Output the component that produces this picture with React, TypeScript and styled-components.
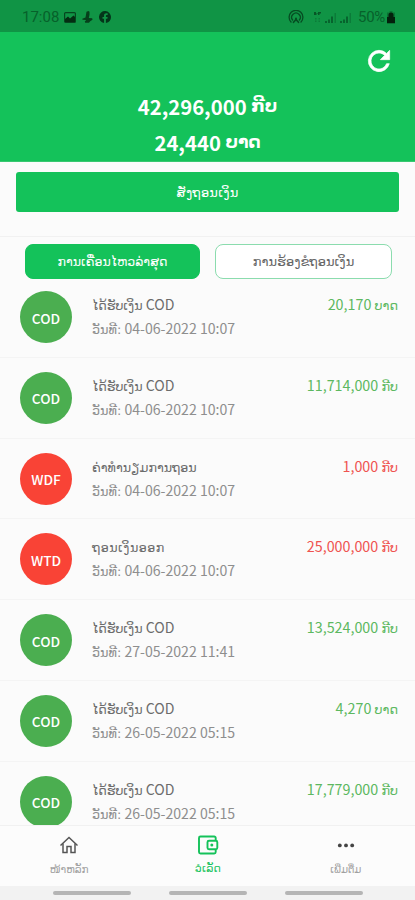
import React from 'react';
import styled, { createGlobalStyle } from 'styled-components';

const latin = '"Noto Sans CJK SC", "DejaVu Sans", sans-serif';

const GlobalStyle = createGlobalStyle`
  * { box-sizing: border-box; }
  body { margin: 0; background: #fbfbfb; }
  button { font: inherit; padding: 0; margin: 0; }
`;

const Screen = styled.div`
  width: 415px;
  height: 900px;
  display: flex;
  flex-direction: column;
  overflow: hidden;
  background: #fbfbfb;
  font-family: ${latin};
`;

const StatusBar = styled.header`
  height: 32px;
  flex: none;
  display: flex;
  align-items: center;
  justify-content: space-between;
  padding: 2px 20px 0 22px;
  background: #109445;
  color: #07612b;
  font: 15px/20px Roboto, sans-serif;
`;

const StatusGroup = styled.div<{ $gap: number }>`
  display: flex;
  align-items: center;
  gap: ${(p) => p.$gap}px;
`;

const Clock = styled.span`
  width: 37px;
  margin-right: -1px;
  white-space: nowrap;
`;

const Battery = styled.span`
  font-size: 15px;
  letter-spacing: -0.3px;
  margin: 0 -1px 0 3px;
`;

const SignalGap = styled.span`
  width: 3px;
`;

const Balance = styled.section`
  height: 130px;
  flex: none;
  display: flex;
  flex-direction: column;
  background: #14c25a;
  border-bottom: 1px solid #38c871;
  color: #fff;
`;

const RefreshRow = styled.div`
  height: 56px;
  display: flex;
  justify-content: flex-end;
  align-items: center;
  padding: 2px 20px 0 0;
`;

const BalanceLine = styled.div`
  height: 36px;
  display: flex;
  align-items: center;
  justify-content: center;
  font-size: 20.3px;
  font-weight: 700;
  line-height: 36px;
  white-space: pre;
`;

const Lao = styled.span<{ $size: number; $spacing?: number }>`
  font-family: "DejaVu Sans", sans-serif;
  font-size: ${(p) => p.$size}px;
  letter-spacing: ${(p) => p.$spacing ?? 0}px;
  white-space: nowrap;
`;

const WithdrawPanel = styled.section`
  height: 75px;
  flex: none;
  padding: 10px 16px 0;
  border-bottom: 1px solid #f1f1f1;
`;

const WithdrawButton = styled.button`
  width: 100%;
  height: 40px;
  display: flex;
  align-items: center;
  justify-content: center;
  border: 0;
  border-radius: 3px;
  background: #14c25a;
  color: #fff;
`;

const Tabs = styled.nav`
  height: 42px;
  flex: none;
  display: grid;
  grid-template-columns: 175px 177px;
  column-gap: 15px;
  padding: 7px 0 0 25px;
`;

const Tab = styled.button<{ $active?: boolean }>`
  height: 35px;
  display: flex;
  align-items: center;
  justify-content: center;
  border: 1px solid ${(p) => (p.$active ? '#14c25a' : '#8bdcae')};
  border-radius: 8px;
  background: ${(p) => (p.$active ? '#14c25a' : '#fff')};
  color: ${(p) => (p.$active ? '#fff' : '#666')};
`;

const List = styled.main`
  flex: 1;
  min-height: 0;
  overflow: hidden;
  margin-top: -2px;
`;

const Row = styled.article`
  height: 80.8px;
  display: grid;
  grid-template-columns: 72px 1fr auto;
  padding: 0 17px 0 20px;
  border-bottom: 1px solid #f4f4f4;
`;

const Avatar = styled.div<{ $debit: boolean }>`
  width: 52px;
  height: 52px;
  margin-top: 14px;
  border-radius: 50%;
  display: flex;
  align-items: center;
  justify-content: center;
  padding-top: 1px;
  background: ${(p) => (p.$debit ? '#f94336' : '#4bae50')};
  color: #fff;
  font-size: 13.7px;
  font-weight: 500;
`;

const Details = styled.div`
  padding-top: 15px;
`;

const Title = styled.div`
  height: 24px;
  line-height: 24px;
  font-size: 14.1px;
  color: #6c6c6c;
  white-space: pre;
`;

const DateLine = styled(Title)`
  color: #8e8e8e;
`;

const Amount = styled.div<{ $debit: boolean }>`
  padding-top: 15px;
  height: 40px;
  line-height: 24px;
  font-size: 14.3px;
  white-space: pre;
  color: ${(p) => (p.$debit ? '#ef5350' : '#5cb860')};
`;

const BottomNav = styled.nav`
  height: 61px;
  flex: none;
  display: grid;
  grid-template-columns: repeat(3, 1fr);
  border-top: 1px solid #f1f1f1;
  background: #fcfcfc;
`;

const NavItem = styled.button<{ $active?: boolean }>`
  display: flex;
  flex-direction: column;
  align-items: center;
  border: 0;
  background: none;
  padding: ${(p) => (p.$active ? '9px 0 0 1px' : '9px 0 0')};
  gap: ${(p) => (p.$active ? 7 : 8)}px;
  line-height: 13px;
  color: ${(p) => (p.$active ? '#14c25a' : '#a0a0a0')};
`;

const SystemBar = styled.footer`
  height: 14px;
  flex: none;
  display: flex;
  justify-content: center;
  gap: 38px;
  padding-top: 5px;
  background: #f2f2f2;
`;

const Handle = styled.span`
  width: 78px;
  height: 4px;
  border-radius: 2px;
  background: #b5b5b5;
`;

type Entry = {
  code: string;
  title: string;
  titleSpacing?: number;
  suffix?: string;
  date: string;
  amount: string;
  unit: string;
  debit?: boolean;
};

const received = { code: 'COD', title: 'ໄດ້ຮັບເງິນ', suffix: ' COD' };

const entries: Entry[] = [
  { ...received, date: '04-06-2022 10:07', amount: '20,170', unit: 'ບາດ' },
  { ...received, date: '04-06-2022 10:07', amount: '11,714,000', unit: 'ກີບ' },
  { code: 'WDF', title: 'ຄ່າທຳນຽມການຖອນ', date: '04-06-2022 10:07', amount: '1,000', unit: 'ກີບ', debit: true },
  { code: 'WTD', title: 'ຖອນເງິນອອກ', titleSpacing: 0.5, date: '04-06-2022 10:07', amount: '25,000,000', unit: 'ກີບ', debit: true },
  { ...received, date: '27-05-2022 11:41', amount: '13,524,000', unit: 'ກີບ' },
  { ...received, date: '26-05-2022 05:15', amount: '4,270', unit: 'ບາດ' },
  { ...received, date: '26-05-2022 05:15', amount: '17,779,000', unit: 'ກີບ' },
];

const PictureIcon = () => (
  <svg width="12" height="11" viewBox="0 0 12 11">
    <rect x="0.6" y="0.6" width="10.8" height="9.8" rx="1" fill="none" stroke="#06461f" strokeWidth="1.2" />
    <path d="M1 9V7l3-2.4 2 1.8L9.500 3.500 11 5v5H1z" fill="#042d12" />
  </svg>
);

const PersonIcon = () => (
  <svg width="11" height="12" viewBox="0 0 11 12" fill="#063f1b">
    <path d="M4.500.8L6.500 0l1 .8v3L6.800 7l3.400.3.3 1.500-2.300 1.400L7 11.800H3.200L2.800 10.500 4.200 9 .5 8.800.3 7.800 3.500 6.500z" />
  </svg>
);

const FacebookIcon = () => (
  <svg width="12" height="12" viewBox="0 0 24 24">
    <path fill="#04351a" d="M24 12a12 12 0 1 0-13.900 11.900v-8.400H7V12h3.100V9.400c0-3 1.800-4.700 4.500-4.700 1.300 0 2.700.2 2.700.2v3h-1.500c-1.500 0-2 .9-2 1.900V12h3.400l-.5 3.500h-2.900v8.400A12 12 0 0 0 24 12z" />
  </svg>
);

const HotspotIcon = () => (
  <svg width="16" height="14" viewBox="0 0 16 14" fill="none" stroke="#064c22" strokeWidth="1.300" strokeLinecap="round">
    <path d="M3 12a6.900 6.900 0 1 1 10 0" />
    <path d="M4.600 10a4.300 4.300 0 1 1 6.800 0" />
    <path d="M8 8.500v1" strokeWidth="2" />
    <path d="M5.500 12.300L8 9.500l2.500 2.800" strokeWidth="1.600" />
  </svg>
);

const NetworkIcon = () => (
  <svg width="9" height="12" viewBox="0 0 9 12" fill="#075626">
    <path d="M1 1h2v1.500h2V1h3v1.500H6.500V4H5V3H3.500v1H1V2.500z" />
    <path d="M2 7h1.500v1.500H2zM5.500 7H7v1.500H5.500zM2 9.500h1.500V11H2zM5.500 9.500H7V11H5.500z" opacity=".4" />
  </svg>
);

const SignalIcon = () => (
  <svg width="12" height="12" viewBox="0 0 12 12" fill="#075d2a">
    <path d="M0 10h2v2H0zM3 8.500h2V12H3zM6 5.500h2V12H6z" opacity=".9" />
    <path d="M9.500 2H11V12H9.500z" opacity=".45" />
  </svg>
);

const BatteryIcon = () => (
  <svg width="8" height="13" viewBox="0 0 8 13">
    <path d="M2.500 0h3v1.500H8V13H0V1.500h2.500z" fill="#0a7435" />
    <path d="M1.500 6V4a2.500 2.500 0 0 1 5 0v2H8v6H0V6z" fill="#03200c" />
  </svg>
);

const RefreshIcon = () => (
  <svg width="32" height="32" viewBox="0 0 24 24" fill="#fff">
    <path d="M17.650 6.350A7.958 7.958 0 0 0 12 4a8 8 0 1 0 7.730 10h-2.080A6 6 0 1 1 12 6c1.660 0 3.140.69 4.220 1.780L13 11h7V4l-2.350 2.350z" stroke="#fff" strokeWidth=".5" />
  </svg>
);

const HomeIcon = () => (
  <svg width="20" height="20" viewBox="0 0 20 20" fill="none" stroke="#555" strokeWidth="1.500">
    <path d="M1.500 10.500L10 2.500l8.500 8" />
    <path d="M4 8.500v9h4v-6h4v6h4v-9" />
  </svg>
);

const WalletIcon = () => (
  <svg width="22" height="20" viewBox="0 0 22 20" fill="none" stroke="#14c25a" strokeWidth="1.900">
    <path d="M18.700 5.500V3a1.500 1.500 0 0 0-1.500-1.500H3.500A1.500 1.500 0 0 0 2 3v14a1.500 1.500 0 0 0 1.500 1.500h13.700a1.500 1.500 0 0 0 1.500-1.500v-2.500" />
    <rect x="10.500" y="5.700" width="9.800" height="8.600" rx="1.500" />
    <circle cx="14.800" cy="10" r="1.500" fill="#14c25a" stroke="none" />
  </svg>
);

const MoreIcon = () => (
  <svg width="18" height="20" viewBox="0 0 18 20" fill="#444">
    <circle cx="2.800" cy="10.400" r="1.900" />
    <circle cx="9" cy="10.400" r="1.900" />
    <circle cx="15.200" cy="10.400" r="1.900" />
  </svg>
);

export default function App() {
  return (
    <>
      <GlobalStyle />
      <Screen>
        <StatusBar>
          <StatusGroup $gap={6}>
            <Clock>17:08</Clock>
            <PictureIcon />
            <PersonIcon />
            <FacebookIcon />
          </StatusGroup>
          <StatusGroup $gap={3}>
            <HotspotIcon />
            <SignalGap />
            <NetworkIcon />
            <SignalIcon />
            <SignalIcon />
            <Battery>50%</Battery>
            <BatteryIcon />
          </StatusGroup>
        </StatusBar>
        <Balance>
          <RefreshRow><RefreshIcon /></RefreshRow>
          <BalanceLine>42,296,000 <Lao $size={17.2}>ກີບ</Lao></BalanceLine>
          <BalanceLine>24,440 <Lao $size={17.2}>ບາດ</Lao></BalanceLine>
        </Balance>
        <WithdrawPanel>
          <WithdrawButton><Lao $size={13} $spacing={0.2}>ສັ່ງຖອນເງິນ</Lao></WithdrawButton>
        </WithdrawPanel>
        <Tabs>
          <Tab $active><Lao $size={12.6}>ການເຄື່ອນໄຫວລ່າສຸດ</Lao></Tab>
          <Tab><Lao $size={13}>ການຮ້ອງຂໍຖອນເງິນ</Lao></Tab>
        </Tabs>
        <List>
          {entries.map((e, i) => (
            <Row key={i}>
              <Avatar $debit={!!e.debit}>{e.code}</Avatar>
              <Details>
                <Title><Lao $size={12.7} $spacing={e.titleSpacing}>{e.title}</Lao>{e.suffix}</Title>
                <DateLine><Lao $size={12.8}>ວັນທີ:</Lao> {e.date}</DateLine>
              </Details>
              <Amount $debit={!!e.debit}>{e.amount} <Lao $size={12.8}>{e.unit}</Lao></Amount>
            </Row>
          ))}
        </List>
        <BottomNav>
          <NavItem><HomeIcon /><Lao $size={10.5}>ໜ້າຫລັກ</Lao></NavItem>
          <NavItem $active><WalletIcon /><Lao $size={11} $spacing={0.2}>ວໍເລັດ</Lao></NavItem>
          <NavItem><MoreIcon /><Lao $size={10}>ເພີ່ມຕື່ມ</Lao></NavItem>
        </BottomNav>
        <SystemBar><Handle /><Handle /><Handle /></SystemBar>
      </Screen>
    </>
  );
}
